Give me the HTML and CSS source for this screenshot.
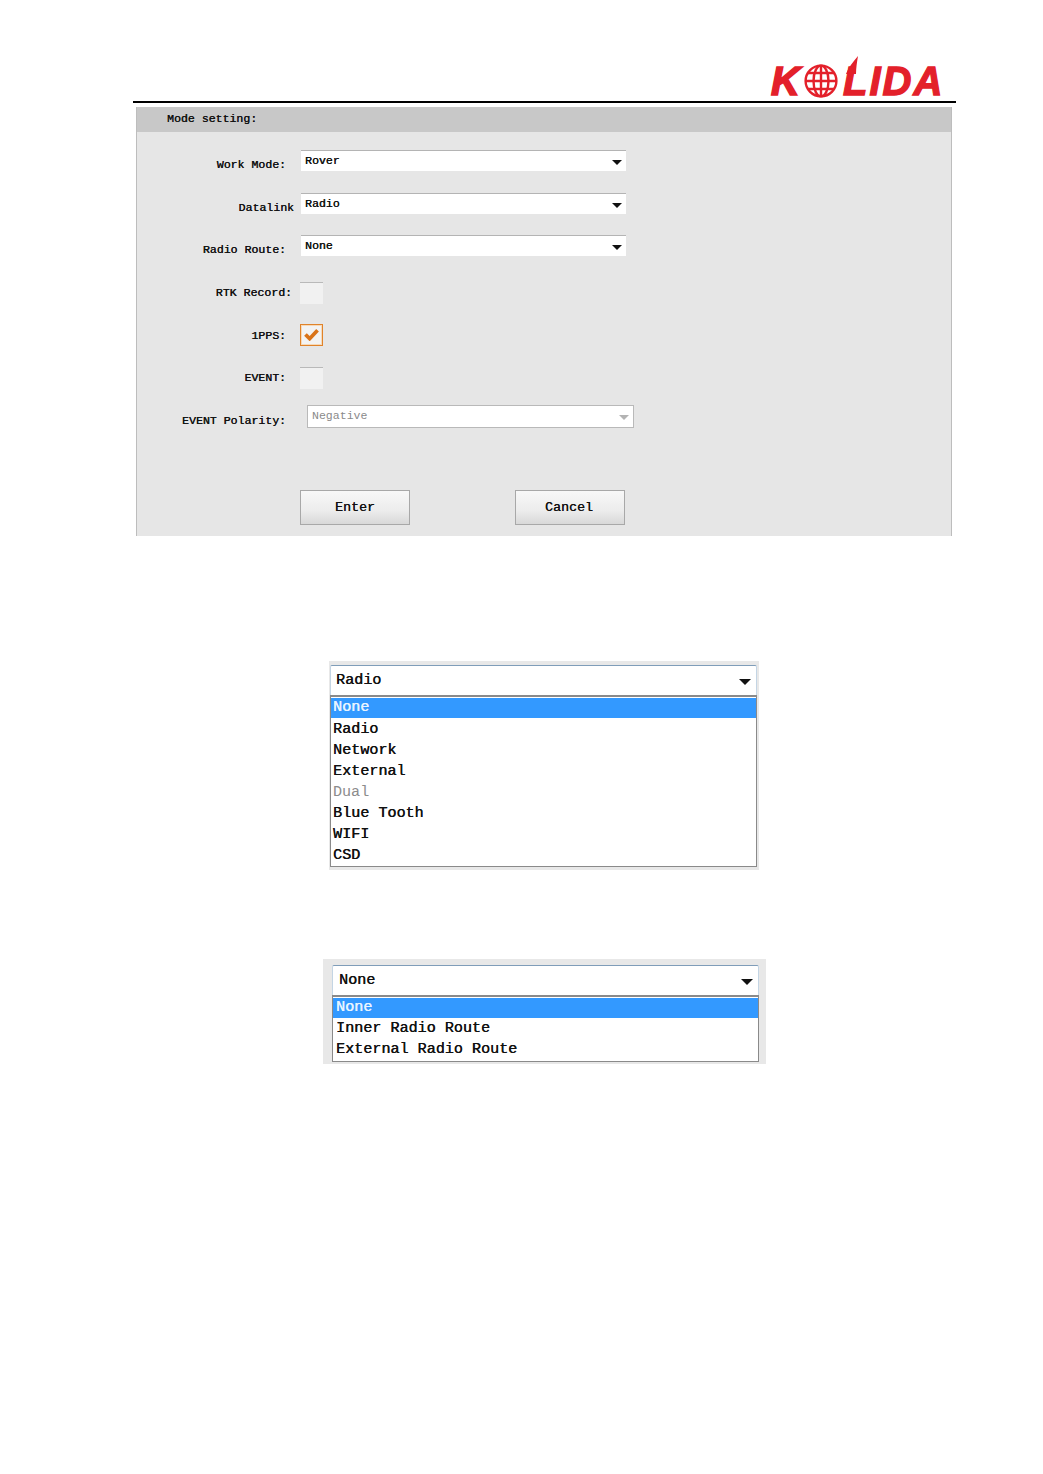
FILE: index.html
```html
<!DOCTYPE html>
<html lang="en">
<head>
<meta charset="utf-8">
<title>Mode setting</title>
<link rel="stylesheet" href="styles.css">
</head>
<body>
<header class="page-head">
  <div class="logo">
    <span class="logo-k">K</span>
    <svg class="globe" viewBox="0 0 34 34" aria-hidden="true">
      <g fill="none" stroke="#e3202a" stroke-width="2.4">
        <circle cx="17" cy="17" r="15.4"/>
        <ellipse cx="17" cy="17" rx="7.5" ry="15.4"/>
        <path d="M17 1.6V32.4M1.6 17H32.4M4 9H30M4 25H30"/>
      </g>
    </svg>
    <span class="logo-rest">LIDA</span>
    <svg class="swoosh" viewBox="0 0 14 18" aria-hidden="true">
      <path d="M0 18C2 12 7 6 12 0C11 6 10 12 10 18Z" fill="#e3202a"/>
    </svg>
  </div>
</header>

<section class="panel">
  <h1 class="panel-title">Mode setting:</h1>
  <div class="form">
    <div class="row">
      <span class="label">Work Mode:</span>
      <div class="select"><span>Rover</span><i class="arrow"></i></div>
    </div>
    <div class="row">
      <span class="label label-wide">Datalink</span>
      <div class="select"><span>Radio</span><i class="arrow"></i></div>
    </div>
    <div class="row">
      <span class="label">Radio Route:</span>
      <div class="select"><span>None</span><i class="arrow"></i></div>
    </div>
    <div class="row">
      <span class="label label-mid">RTK Record:</span>
      <div class="check"></div>
    </div>
    <div class="row">
      <span class="label">1PPS:</span>
      <div class="check checked">
        <svg viewBox="0 0 16 14" aria-hidden="true"><path d="M1.5 7L6 11.5L14.5 2.5" fill="none" stroke="#d9741a" stroke-width="4"/></svg>
      </div>
    </div>
    <div class="row">
      <span class="label">EVENT:</span>
      <div class="check"></div>
    </div>
    <div class="row">
      <span class="label">EVENT Polarity:</span>
      <div class="select disabled"><span>Negative</span><i class="arrow"></i></div>
    </div>
  </div>
  <div class="actions">
    <button class="btn" type="button">Enter</button>
    <button class="btn" type="button">Cancel</button>
  </div>
</section>

<section class="combo combo-datalink">
  <div class="combo-field"><span>Radio</span><i class="arrow"></i></div>
  <ul class="combo-list">
    <li class="active">None</li>
    <li>Radio</li>
    <li>Network</li>
    <li>External</li>
    <li class="off">Dual</li>
    <li>Blue Tooth</li>
    <li>WIFI</li>
    <li>CSD</li>
  </ul>
</section>

<section class="combo combo-route">
  <div class="combo-field"><span>None</span><i class="arrow"></i></div>
  <ul class="combo-list">
    <li class="active">None</li>
    <li>Inner Radio Route</li>
    <li>External Radio Route</li>
  </ul>
</section>
</body>
</html>
```
FILE: styles.css
```css
* { box-sizing: border-box; }
html, body { margin: 0; padding: 0; background: #fff; }
body {
  width: 1043px;
  height: 1474px;
  overflow: hidden;
  font-family: "Liberation Mono", "DejaVu Sans Mono", monospace;
  color: #111;
}

.page-head {
  height: 103px;
  margin-left: 133px;
  width: 823px;
  border-bottom: 2px solid #000;
  display: flex;
  justify-content: flex-end;
  align-items: flex-end;
  padding-right: 15px;
  padding-bottom: 2px;
}
.logo {
  position: relative;
  display: flex;
  align-items: center;
  height: 36px;
  font-family: "Liberation Sans", Arial, sans-serif;
  font-weight: 700;
  font-style: italic;
  font-size: 40px;
  line-height: 36px;
  color: #e3202a;
}
.logo-k { width: 32px; -webkit-text-stroke: 1.6px #e3202a; }
.globe { width: 34px; height: 34px; margin: 0 5px 0 1px; }
.logo-rest { -webkit-text-stroke: 1.3px #e3202a; width: 98px; letter-spacing: 2px; white-space: nowrap; }
.swoosh { position: absolute; left: 75px; top: -7px; width: 14px; height: 18px; }

.panel {
  width: 816px;
  height: 429px;
  margin: 4px 0 0 136px;
  background: #e6e6e6;
  border-left: 1px solid #bdbdbd;
  border-right: 1px solid #bdbdbd;
}
.panel-title {
  margin: 0;
  height: 25px;
  padding: 5px 0 0 30px;
  background: #c8c8c8;
  font-size: 11.55px;
  line-height: 14px;
  font-weight: 400;
  text-shadow: 0.3px 0 0 #111;
}
.form { padding-top: 12px; }
.row {
  display: flex;
  align-items: center;
  height: 42.6px;
  gap: 14px;
}
.label {
  width: 149px;
  text-align: right;
  font-size: 11.55px;
  line-height: 14px;
  white-space: nowrap;
  text-shadow: 0.3px 0 0 #111;
}
.label-wide { margin-right: -8px; padding-left: 8px; width: 157px; }
.label-mid { margin-right: -6px; width: 155px; }

.select {
  position: relative;
  width: 325px;
  height: 21px;
  margin-left: 1px;
  margin-bottom: 9px;
  padding: 3px 0 0 4px;
  background: #fff;
  border-top: 1px solid #b4b4b4;
  font-size: 11.55px;
  line-height: 14px;
  text-shadow: 0.3px 0 0 #111;
}
.select .arrow { right: 4px; top: 9px; }
.select.disabled {
  width: 327px;
  height: 23px;
  margin-left: 7px;
  border: 1px solid #b9b9b9;
  color: #8a8a8a;
  text-shadow: none;
}
.select.disabled .arrow { border-top-color: #b3b3b3; }

.arrow {
  position: absolute;
  width: 0;
  height: 0;
  border-left: 5px solid transparent;
  border-right: 5px solid transparent;
  border-top: 5px solid #111;
}

.check {
  width: 23px;
  height: 22px;
  background: #f1f1f1;
  border-top: 1px solid #b9b9b9;
}
.check.checked {
  display: flex;
  align-items: center;
  justify-content: center;
  margin-bottom: 2px;
  background: #f3f3f3;
  border: 1px solid #e0832a;
  box-shadow: inset 0 0 0 1px #f6d9b8;
}
.check.checked svg { width: 15px; height: 13px; }

.actions {
  display: flex;
  gap: 105px;
  padding: 48.3px 0 0 163px;
}
.btn {
  width: 110px;
  height: 35px;
  padding: 0;
  font: 13.3px/1 "Liberation Mono", monospace;
  color: #111;
  border: 1px solid #a8a8a8;
  border-radius: 0;
  background: linear-gradient(#f8f8f8, #ececec 60%, #d8d8d8);
  text-shadow: 0.2px 0 0 #111;
}
.btn + .btn { padding-right: 2px; }

.combo {
  background: #e8e8e8;
  font-size: 15.1px;
  line-height: 21px;
  text-shadow: 0.35px 0 0 #111;
}
.combo-datalink {
  width: 430px;
  height: 209px;
  margin: 125px 0 0 329px;
  padding: 4px 2px 3px 1px;
}
.combo-route {
  width: 443px;
  height: 105px;
  margin: 89px 0 0 323px;
  padding: 6px 7px 3px 9px;
}
.combo-field {
  position: relative;
  height: 30px;
  padding: 4px 0 0 5px;
  background: #fff;
  border: 1px solid #c4d5e4;
  border-top: 1px solid #7f9db9;
  border-bottom: 0;
  border-radius: 2px 2px 0 0;
}
.combo-route .combo-field { padding-left: 6px; }
.combo-field .arrow { right: 5px; top: 13px; border-left-width: 6px; border-right-width: 6px; border-top-width: 6px; }
.combo-list {
  list-style: none;
  margin: 0;
  padding: 1px 0 0;
  background: #fff;
  border: 1px solid #8a8a8a;
  border-top-width: 2px;
}
.combo-route .combo-list { padding-bottom: 1px; }
.combo-list li {
  height: 21px;
  padding-left: 2px;
}
.combo-route .combo-list li { padding-left: 3px; }
.combo-list li.active {
  background: #3399ff;
  color: #e8f4ff;
  text-shadow: 0.35px 0 0 #e8f4ff;
  height: 20px;
  line-height: 19px;
  margin-bottom: 1px;
}
.combo-route .combo-list li.active { margin-bottom: 0; }
.combo-list li.off { color: #8c8c8c; text-shadow: none; }
```
